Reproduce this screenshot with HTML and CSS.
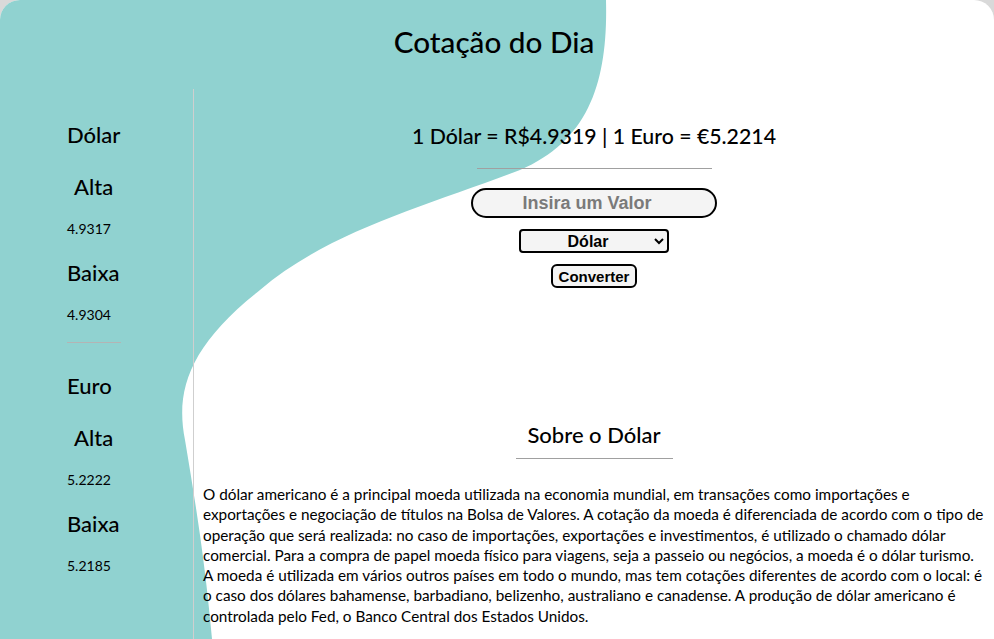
FILE: index.html
```html
<!DOCTYPE html>
<html lang="pt-BR">
<head>
<meta charset="utf-8">
<title>Cotação do Dia</title>
<link rel="stylesheet" href="styles.css">
</head>
<body>
<div class="page">
  <svg class="blob" width="994" height="639" viewBox="0 0 994 639" aria-hidden="true">
    <path d="M0 0 H606 C608 80 590 140 520 170 C430 205 330 230 260 290 C190 345 175 390 185 440 C195 500 205 560 212 639 H0 Z" fill="#90d2d0"/>
  </svg>
  <h1 class="title">Cotação do Dia</h1>
  <div class="layout">
    <aside class="side">
      <section class="cur-block">
        <h2 class="cur">Dólar</h2>
        <h3 class="lbl">Alta</h3>
        <p class="val">4.9317</p>
        <h3 class="lbl low">Baixa</h3>
        <p class="val">4.9304</p>
      </section>
      <hr class="side-rule">
      <section class="cur-block">
        <h2 class="cur">Euro</h2>
        <h3 class="lbl">Alta</h3>
        <p class="val">5.2222</p>
        <h3 class="lbl low">Baixa</h3>
        <p class="val">5.2185</p>
      </section>
    </aside>
    <main class="main">
      <h2 class="rates">1 Dólar = R$4.9319 | 1 Euro = €5.2214</h2>
      <hr class="rule-rates">
      <form class="conv">
        <input class="amount" type="text" placeholder="Insira um Valor">
        <select class="currency">
          <option>Dólar</option>
          <option>Euro</option>
        </select>
        <button class="btn" type="button">Converter</button>
      </form>
      <h2 class="about">Sobre o Dólar</h2>
      <hr class="rule-about">
      <p class="text">O dólar americano é a principal moeda utilizada na economia mundial, em transações como importações e exportações e negociação de títulos na Bolsa de Valores. A cotação da moeda é diferenciada de acordo com o tipo de operação que será realizada: no caso de importações, exportações e investimentos, é utilizado o chamado dólar comercial. Para a compra de papel moeda físico para viagens, seja a passeio ou negócios, a moeda é o dólar turismo. A moeda é utilizada em vários outros países em todo o mundo, mas tem cotações diferentes de acordo com o local: é o caso dos dólares bahamense, barbadiano, belizenho, australiano e canadense. A produção de dólar americano é controlada pelo Fed, o Banco Central dos Estados Unidos.</p>
    </main>
  </div>
</div>
</body>
</html>
```

FILE: styles.css
```css
html {
  background: #d9d9d9;
}
body {
  margin: 0;
  font-family: Lato, "Open Sans", sans-serif;
  color: #000;
}
.page {
  position: relative;
  width: 994px;
  height: 639px;
  overflow: hidden;
  background: #fff;
  border-radius: 20px 20px 0 0;
}
.blob {
  position: absolute;
  left: 0;
  top: 0;
  z-index: 0;
}
.title, .layout {
  position: relative;
  z-index: 1;
}
.title {
  margin: 0;
  padding: 23px 6px 0 0;
  height: 89px;
  box-sizing: border-box;
  font-size: 29.7px;
  font-weight: 500;
  text-align: center;
  line-height: 38px;
}
.layout {
  display: flex;
  height: 550px;
}
.side {
  width: 194px;
  border-right: 1px solid #cfcfcf;
  box-sizing: border-box;
  padding: 31px 0 0 67px;
  display: flex;
  flex-direction: column;
  align-items: flex-start;
}
.cur-block {
  display: flex;
  flex-direction: column;
  align-items: flex-start;
}
.cur, .lbl {
  margin: 0;
  font-size: 22px;
  font-weight: 500;
  line-height: 30px;
}
.cur {
  margin-bottom: 22px;
}
.lbl {
  margin-left: 7px;
  margin-bottom: 17px;
}
.lbl.low {
  margin-left: 0;
}
.val {
  margin: 0 0 19px;
  font-size: 14px;
  line-height: 20px;
}
.val:last-child {
  margin-bottom: 0;
}
.side-rule {
  width: 54px;
  margin: 17px 0 28px;
  border: 0;
  border-top: 1px solid #b4b4b4;
}
.main {
  flex: 1;
  display: flex;
  flex-direction: column;
  align-items: center;
  padding: 32px 9px 0;
}
.rates {
  margin: 0;
  font-size: 21.3px;
  font-weight: 500;
  line-height: 30px;
}
.rule-rates {
  width: 235px;
  margin: 17px 0 19px;
  border: 0;
  border-top: 1px solid #a0a0a0;
}
.conv {
  display: flex;
  flex-direction: column;
  align-items: center;
  gap: 11px;
}
.amount {
  width: 246px;
  height: 30px;
  box-sizing: border-box;
  border: 2px solid #000;
  border-radius: 15px;
  background: #f4f4f4;
  font-family: "Liberation Sans", Arial, sans-serif;
  font-size: 18px;
  font-weight: bold;
  text-align: center;
  padding: 0 14px 0 0;
}
.amount::placeholder {
  color: #7a7a7a;
}
.currency {
  width: 150px;
  height: 24px;
  box-sizing: border-box;
  border: 2px solid #000;
  border-radius: 4px;
  background: #f4f4f4;
  font-family: "Liberation Sans", Arial, sans-serif;
  font-size: 16px;
  font-weight: bold;
  text-align: center;
  text-align-last: center;
  padding: 0;
  color: #000;
}
.btn {
  width: 86px;
  height: 24px;
  box-sizing: border-box;
  border: 2px solid #000;
  border-radius: 6px;
  background: #f4f4f4;
  font-family: "Liberation Sans", Arial, sans-serif;
  font-size: 15px;
  font-weight: bold;
  padding: 0;
  color: #000;
}
.about {
  margin: 132px 0 0;
  font-size: 22px;
  font-weight: 500;
  line-height: 30px;
}
.rule-about {
  width: 157px;
  margin: 8px 0 25px;
  border: 0;
  border-top: 1px solid #a0a0a0;
}
.text {
  margin: 0;
  align-self: stretch;
  font-size: 15.3px;
  line-height: 20.3px;
}
```
